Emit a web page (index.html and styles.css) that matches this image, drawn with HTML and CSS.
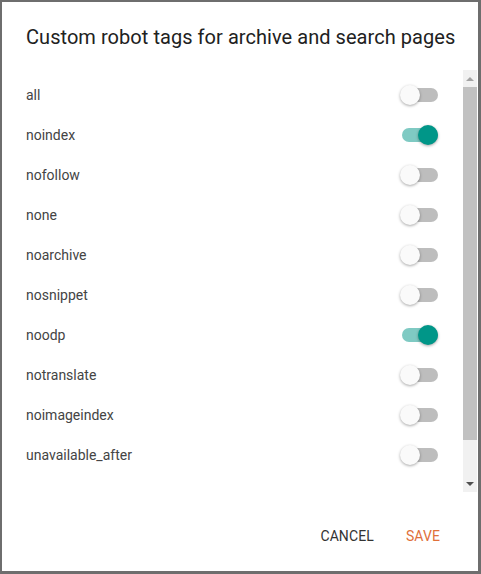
FILE: index.html
```html
<!DOCTYPE html>
<html lang="en">

<head>
    <meta charset="UTF-8">
    <meta name="viewport" content="width=device-width, initial-scale=1.0">
    <title>Custom robot tags</title>
    <link rel="stylesheet" href="styles.css">
</head>

<body>
    <div class="dialog">
        <h1 class="title">Custom robot tags for archive and search pages</h1>

        <div class="content">
            <ul class="tags">
                <li class="tag"><span>all</span><span class="switch"><span class="knob"></span></span></li>
                <li class="tag"><span>noindex</span><span class="switch on"><span class="knob"></span></span></li>
                <li class="tag"><span>nofollow</span><span class="switch"><span class="knob"></span></span></li>
                <li class="tag"><span>none</span><span class="switch"><span class="knob"></span></span></li>
                <li class="tag"><span>noarchive</span><span class="switch"><span class="knob"></span></span></li>
                <li class="tag"><span>nosnippet</span><span class="switch"><span class="knob"></span></span></li>
                <li class="tag"><span>noodp</span><span class="switch on"><span class="knob"></span></span></li>
                <li class="tag"><span>notranslate</span><span class="switch"><span class="knob"></span></span></li>
                <li class="tag"><span>noimageindex</span><span class="switch"><span class="knob"></span></span></li>
                <li class="tag"><span>unavailable_after</span><span class="switch"><span class="knob"></span></span></li>
            </ul>

            <div class="scrollbar">
                <div class="arrow up"></div>
                <div class="thumb"></div>
                <div class="track"></div>
                <div class="arrow down"></div>
            </div>
        </div>

        <div class="actions">
            <button class="btn">Cancel</button>
            <button class="btn save">Save</button>
        </div>
    </div>
</body>

</html>
```

FILE: styles.css
```css
html,
body {
    margin: 0;
    padding: 0;
    background-color: #fff;
}

body {
    font-family: Roboto, "Liberation Sans", Arial, sans-serif;
}

.dialog {
    width: 481px;
    height: 574px;
    box-sizing: border-box;
    border-style: solid;
    border-color: #6e6e6e;
    border-width: 2px 3px 3px 2px;
    display: flex;
    flex-direction: column;
    background-color: #fff;
}

.title {
    margin: 0;
    padding: 21px 0 0 24px;
    font-size: 20px;
    line-height: 28px;
    font-weight: 400;
    letter-spacing: 0.05px;
    color: #212121;
    height: 47px;
}

.content {
    display: flex;
    height: 422px;
}

.tags {
    list-style: none;
    margin: 0;
    padding: 5px 25px 0 24px;
    flex: 1;
}

.tag {
    height: 40px;
    display: flex;
    align-items: center;
    justify-content: space-between;
    font-size: 14px;
    color: #444;
}

.switch {
    position: relative;
    width: 36px;
    height: 14px;
    border-radius: 7px;
    background-color: #bdbdbd;
}

.knob {
    position: absolute;
    top: -3px;
    left: -2px;
    width: 20px;
    height: 20px;
    border-radius: 50%;
    background-color: #fafafa;
    box-shadow: 0 1px 3px rgba(0, 0, 0, 0.35);
}

.switch.on {
    background-color: #7fcac3;
}

.switch.on .knob {
    left: 16px;
    background-color: #009688;
}

.scrollbar {
    width: 14px;
    margin-right: 1px;
    display: flex;
    flex-direction: column;
    background-color: #f1f1f1;
}

.arrow {
    height: 17px;
    display: flex;
    align-items: center;
    justify-content: center;
}

.arrow::before {
    content: "";
    border-left: 4px solid transparent;
    border-right: 4px solid transparent;
}

.arrow.up::before {
    border-bottom: 4px solid #a3a3a3;
}

.arrow.down::before {
    border-top: 4px solid #505050;
}

.thumb {
    height: 353px;
    background-color: #c1c1c1;
}

.track {
    flex: 1;
}

.actions {
    display: flex;
    justify-content: flex-end;
    gap: 16px;
    padding: 26px 30px 0 0;
}

.btn {
    height: 36px;
    padding: 0 8px;
    border: none;
    background: none;
    font-family: Roboto, "Liberation Sans", Arial, sans-serif;
    font-size: 14px;
    font-weight: 400;
    letter-spacing: 0.1px;
    text-transform: uppercase;
    color: #333;
    cursor: pointer;
}

.btn.save {
    color: #e0703a;
}
```
